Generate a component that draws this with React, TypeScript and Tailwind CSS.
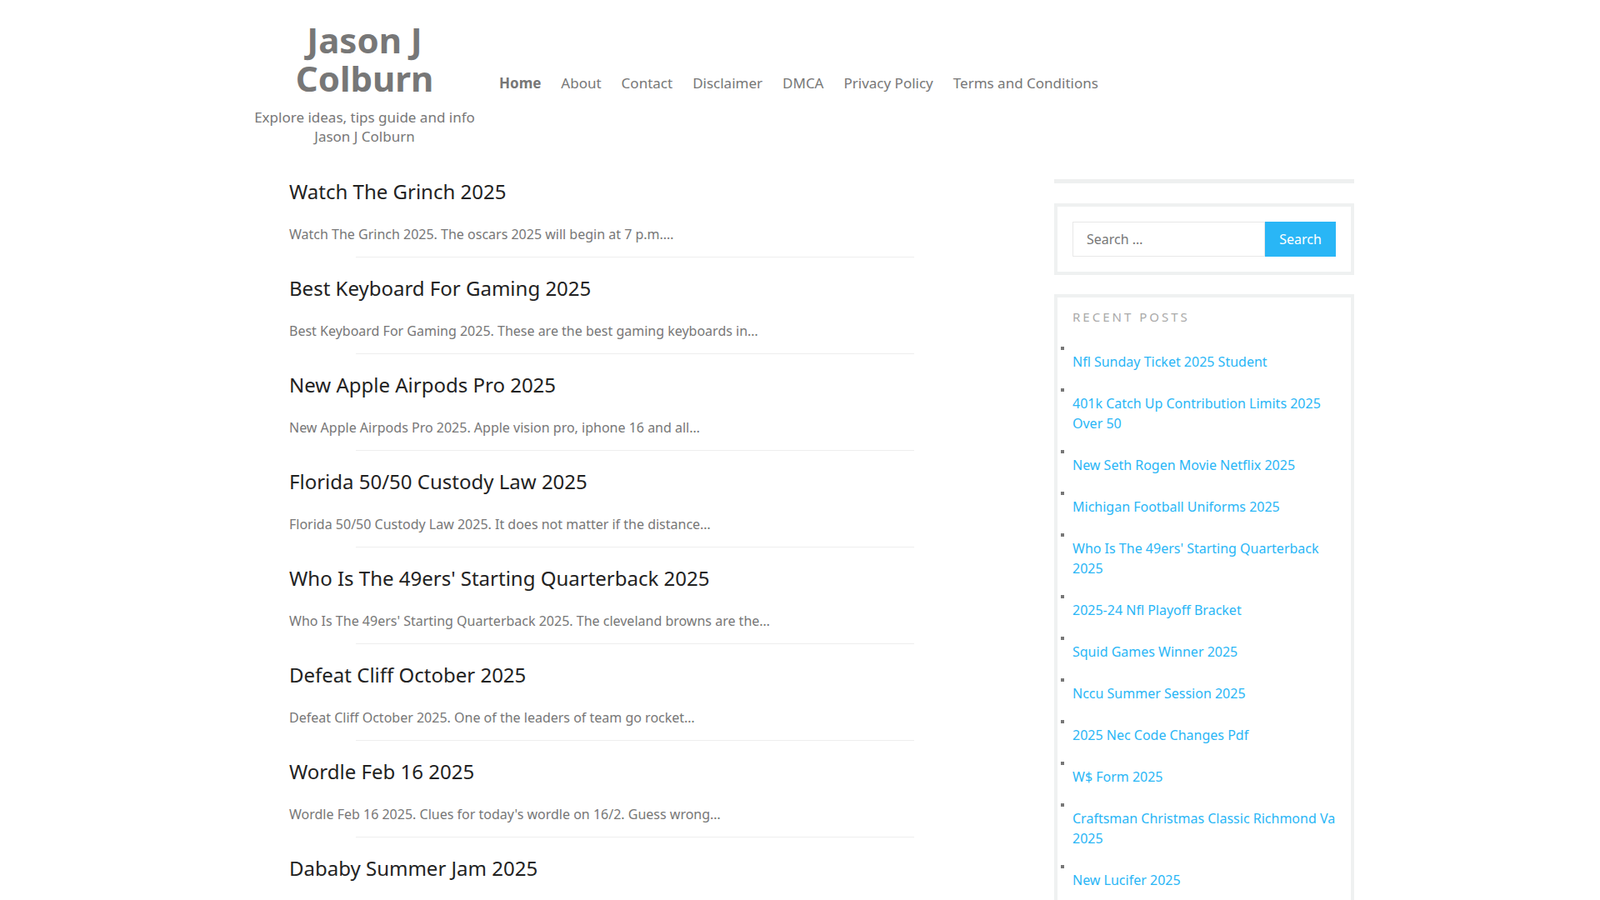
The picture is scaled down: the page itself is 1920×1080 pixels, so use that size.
const posts = [
  ["Watch The Grinch 2025", "Watch The Grinch 2025. The oscars 2025 will begin at 7 p.m.…"],
  ["Best Keyboard For Gaming 2025", "Best Keyboard For Gaming 2025. These are the best gaming keyboards in…"],
  ["New Apple Airpods Pro 2025", "New Apple Airpods Pro 2025. Apple vision pro, iphone 16 and all…"],
  ["Florida 50/50 Custody Law 2025", "Florida 50/50 Custody Law 2025. It does not matter if the distance…"],
  ["Who Is The 49ers' Starting Quarterback 2025", "Who Is The 49ers' Starting Quarterback 2025. The cleveland browns are the…"],
  ["Defeat Cliff October 2025", "Defeat Cliff October 2025. One of the leaders of team go rocket…"],
  ["Wordle Feb 16 2025", "Wordle Feb 16 2025. Clues for today's wordle on 16/2. Guess wrong…"],
  ["Dababy Summer Jam 2025", "Dababy Summer Jam 2025. Dababy will perform at the summer jam…"],
  ["Nfl Sunday Ticket 2025 Student", "Nfl Sunday Ticket 2025 Student. Students can get the nfl sunday…"],
];
const recent = [
  "Nfl Sunday Ticket 2025 Student",
  "401k Catch Up Contribution Limits 2025 Over 50",
  "New Seth Rogen Movie Netflix 2025",
  "Michigan Football Uniforms 2025",
  "Who Is The 49ers' Starting Quarterback 2025",
  "2025-24 Nfl Playoff Bracket",
  "Squid Games Winner 2025",
  "Nccu Summer Session 2025",
  "2025 Nec Code Changes Pdf",
  "W$ Form 2025",
  "Craftsman Christmas Classic Richmond Va 2025",
  "New Lucifer 2025",
  "Ucla Football Schedule 2025",
];
const nav = ["Home", "About", "Contact", "Disclaimer", "DMCA", "Privacy Policy", "Terms and Conditions"];

export default function App() {
  return (
    <div className="bg-white min-h-screen pl-[303px] pt-[25px] pb-20 font-['Liberation_Sans',Arial,sans-serif]">
      <header className="flex">
        <div className="w-[269px] text-center">
          <div className="text-[42px] leading-[46px] font-bold text-[#777]">Jason J<br />Colburn</div>
          <div className="mt-[12px] text-[17px] leading-[23px] text-[#777]">Explore ideas, tips guide and info<br />Jason J Colburn</div>
        </div>
        <nav className="ml-[27px] mt-[63px] flex gap-[24px] text-[17px] leading-[24px] text-[#777] h-fit">
          {nav.map((n, i) => (
            <span key={n} className={i === 0 ? "font-bold" : ""}>{n}</span>
          ))}
        </nav>
      </header>
      <div className="flex mt-[40px]">
        <main className="w-[962px] pl-[44px]">
          {posts.map(([t, e]) => (
            <article key={t}>
              <h2 className="text-[24px] leading-[30px] text-[#222]">{t}</h2>
              <p className="mt-[24px] text-[16px] leading-[24px] text-[#777]">{e}</p>
              <div className="ml-[80px] w-[670px] h-px bg-[#eeeeee] mt-[15px] mb-[22px]" />
            </article>
          ))}
        </main>
        <aside className="w-[360px]">
          <div className="h-[5px] bg-[#eef0f0]" />
          <div className="mt-[24px] border-4 border-[#eff1f1] p-[18px] flex">
            <div className="w-[231px] h-[42px] border border-[#e8e8e8] flex items-center px-[16px] text-[16px] text-[#777]">Search …</div>
            <div className="w-[85px] h-[42px] bg-[#29b6f6] text-white text-[16px] flex items-center justify-center">Search</div>
          </div>
          <div className="mt-[23px] border-4 border-[#eff1f1] pt-[13px] pl-[18px] pr-[18px]">
            <h3 className="text-[15px] leading-[20px] tracking-[0.2em] text-[#aaa]">RECENT POSTS</h3>
            <ul className="mt-[24px]">
              {recent.map((r) => (
                <li key={r} className="relative pt-[8px] pb-[18px]">
                  <span className="absolute left-[-14px] top-[2px] w-[4px] h-[4px] bg-[#777]" />
                  <span className="block text-[16px] leading-[24px] text-[#29b6f6]">{r}</span>
                </li>
              ))}
            </ul>
          </div>
        </aside>
      </div>
    </div>
  );
}
